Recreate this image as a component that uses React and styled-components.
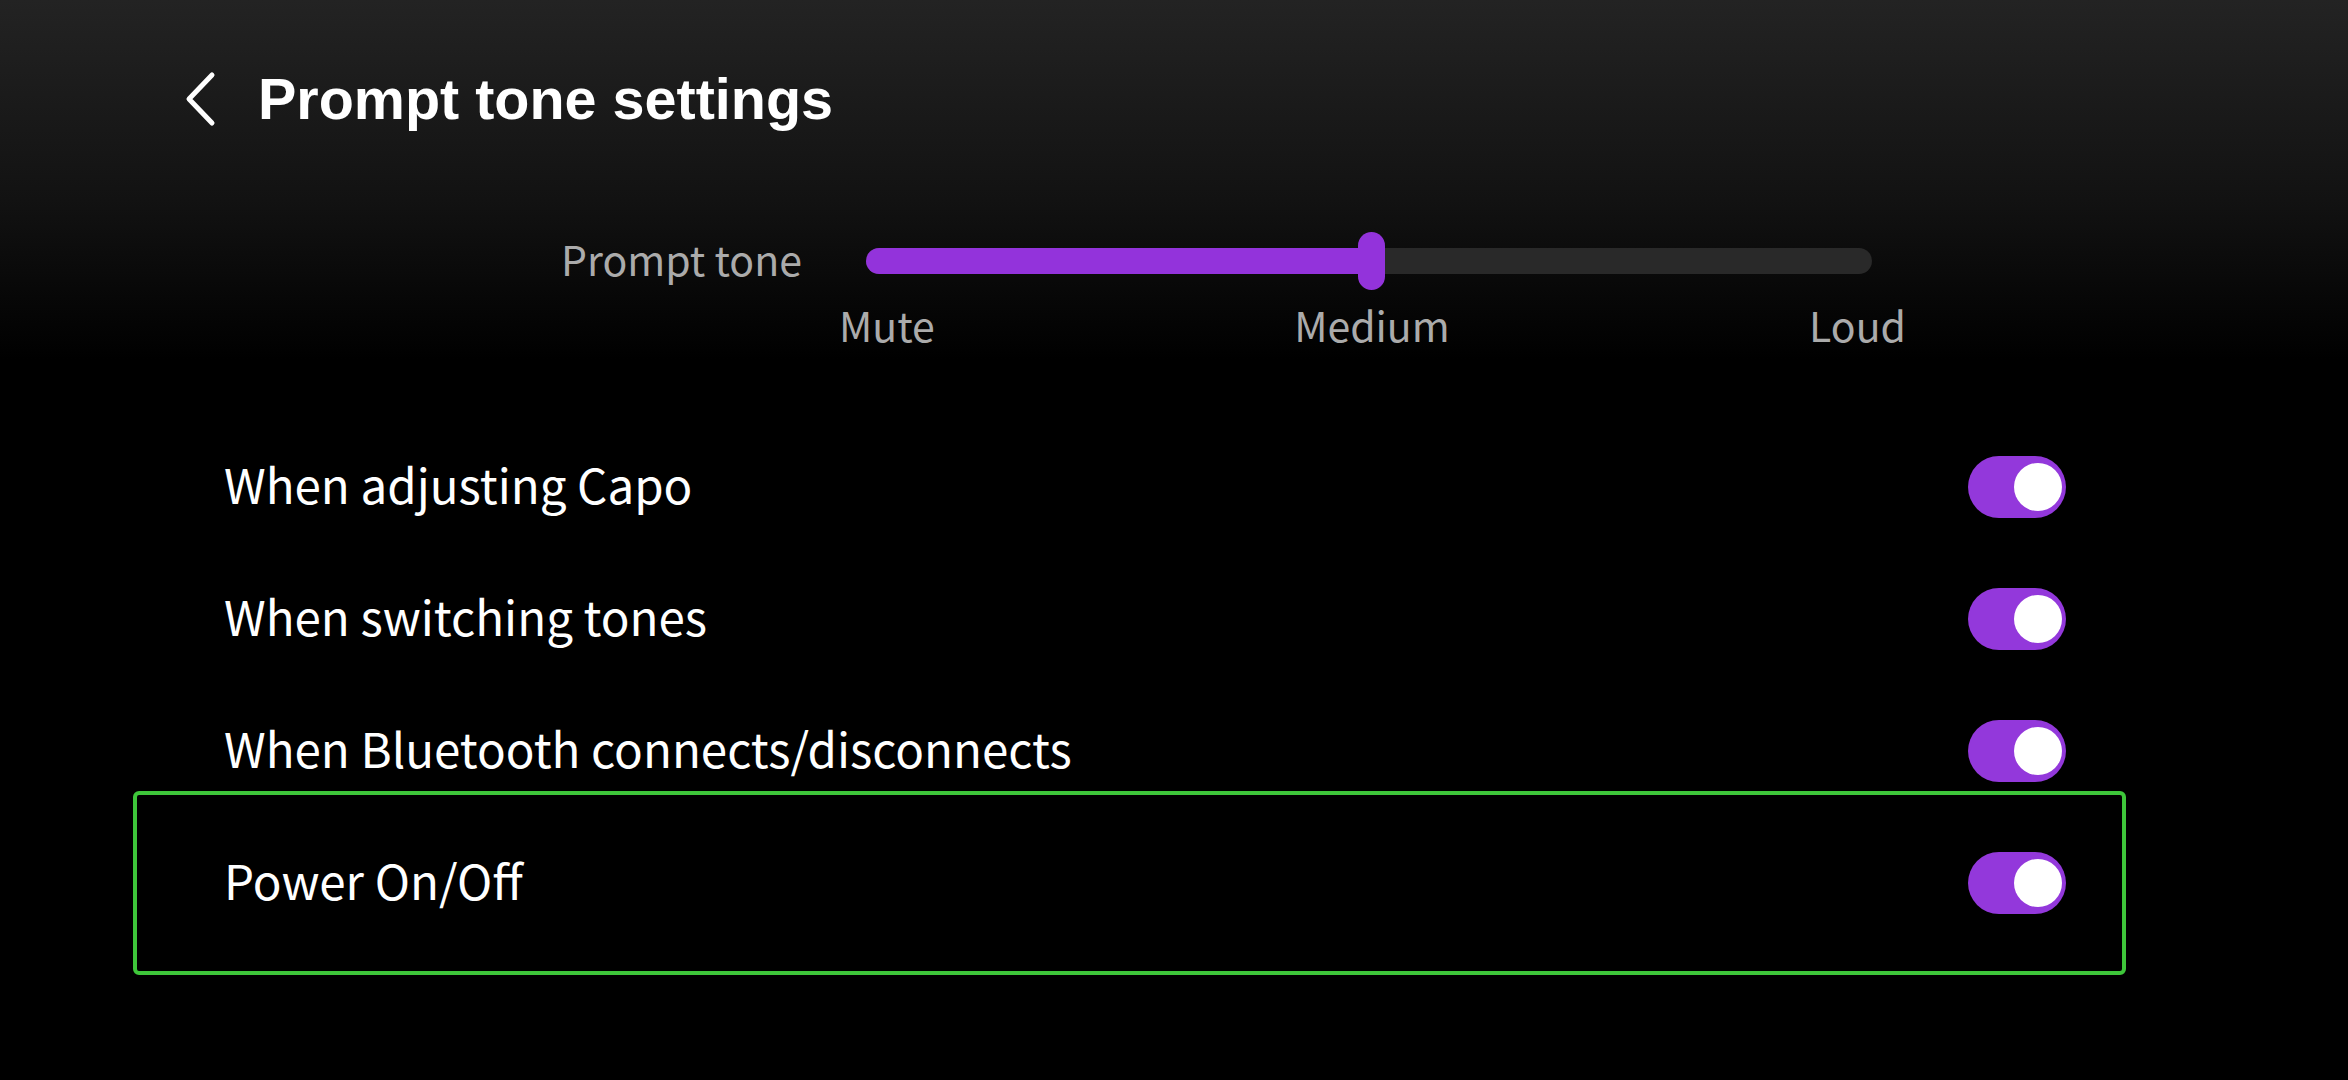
import React from 'react';
import styled, { createGlobalStyle } from 'styled-components';

const GlobalStyle = createGlobalStyle`
  html, body {
    margin: 0;
    padding: 0;
    background: #000;
  }
  #root {
    width: 2348px;
    height: 1080px;
  }
`;

const Page = styled.div`
  width: 2348px;
  height: 1080px;
  overflow: hidden;
  background: linear-gradient(180deg, #232323 0px, #121212 200px, #000 360px);
  display: flex;
  flex-direction: column;
  font-family: "Noto Sans CJK SC", "Noto Sans", sans-serif;
`;

const Header = styled.div`
  height: 198px;
  display: flex;
  align-items: center;
  padding-left: 184px;
  gap: 40px;
`;

const BackButton = styled.button`
  background: none;
  border: none;
  padding: 0;
  width: 34px;
  height: 56px;
  display: flex;
  align-items: center;
  justify-content: center;
  cursor: pointer;
`;

const Title = styled.h1`
  margin: 0;
  font-family: "Liberation Sans", Arial, sans-serif;
  font-weight: 700;
  font-size: 57.5px;
  color: #fff;
`;

const SliderBlock = styled.div`
  margin-top: 34px;
  margin-left: 561px;
  display: grid;
  grid-template-columns: 305px 1006px;
  grid-template-rows: 58px auto;
  row-gap: 12px;
`;

const SliderLabel = styled.div`
  align-self: center;
  margin-top: -6px;
  font-size: 41px;
  color: #ababab;
  white-space: nowrap;
`;

const Track = styled.div`
  position: relative;
  align-self: center;
  height: 26px;
  border-radius: 13px;
  background: #292929;
`;

const Fill = styled.div`
  height: 100%;
  border-radius: 13px 0 0 13px;
  background: #9333db;
`;

const Thumb = styled.div`
  position: absolute;
  top: 50%;
  width: 27px;
  height: 58px;
  margin-left: -14px;
  transform: translateY(-50%);
  border-radius: 14px;
  background: #9333db;
`;

const Ticks = styled.div`
  grid-column: 2;
  margin-left: -27px;
  margin-right: -34px;
  display: flex;
  justify-content: space-between;
  font-size: 41px;
  line-height: 44px;
  color: #ababab;
`;

const List = styled.div`
  margin-top: 75px;
  margin-left: 133px;
  width: 1993px;
  display: flex;
  flex-direction: column;
`;

const Row = styled.div`
  position: relative;
  height: 132px;
  display: flex;
  align-items: center;
  justify-content: space-between;
  padding: 0 60px 0 91px;
  box-sizing: border-box;

  &::after {
    content: '';
    display: ${props => (props.focused ? 'block' : 'none')};
    position: absolute;
    left: 0;
    right: 0;
    top: -26px;
    bottom: -26px;
    border: 4px solid #3ec63a;
    border-radius: 6px;
    pointer-events: none;
  }
`;

const RowText = styled.span`
  margin-top: -8px;
  font-size: 47.5px;
  color: #fff;
  white-space: nowrap;
`;

const Toggle = styled.div`
  width: 98px;
  height: 62px;
  border-radius: 31px;
  background: ${props => (props.on ? '#9338db' : '#3a3a3a')};
  display: flex;
  align-items: center;
  justify-content: ${props => (props.on ? 'flex-end' : 'flex-start')};
  padding: 0 4px;
  box-sizing: border-box;
`;

const Knob = styled.div`
  width: 48px;
  height: 48px;
  border-radius: 50%;
  background: #fff;
`;

const BackIcon = () => (
  <svg width="34" height="56" viewBox="0 0 34 56" fill="none">
    <polyline
      points="28,4 5,28 28,52"
      stroke="#fff"
      strokeWidth="5"
      strokeLinecap="round"
      strokeLinejoin="round"
    />
  </svg>
);

const options = [
  { id: 'capo', label: 'When adjusting Capo', on: true },
  { id: 'tones', label: 'When switching tones', on: true },
  { id: 'bt', label: 'When Bluetooth connects/disconnects', on: true },
  { id: 'power', label: 'Power On/Off', on: true, focused: true }
];

const level = 50.3;

export default function App() {
  return (
    <Page>
      <GlobalStyle />
      <Header>
        <BackButton aria-label="Back">
          <BackIcon />
        </BackButton>
        <Title>Prompt tone settings</Title>
      </Header>

      <SliderBlock>
        <SliderLabel>Prompt tone</SliderLabel>
        <Track>
          <Fill style={{ width: `${level}%` }} />
          <Thumb style={{ left: `${level}%` }} />
        </Track>
        <Ticks>
          <span>Mute</span>
          <span>Medium</span>
          <span>Loud</span>
        </Ticks>
      </SliderBlock>

      <List>
        {options.map(opt => (
          <Row key={opt.id} focused={opt.focused}>
            <RowText>{opt.label}</RowText>
            <Toggle on={opt.on}>
              <Knob />
            </Toggle>
          </Row>
        ))}
      </List>
    </Page>
  );
}
